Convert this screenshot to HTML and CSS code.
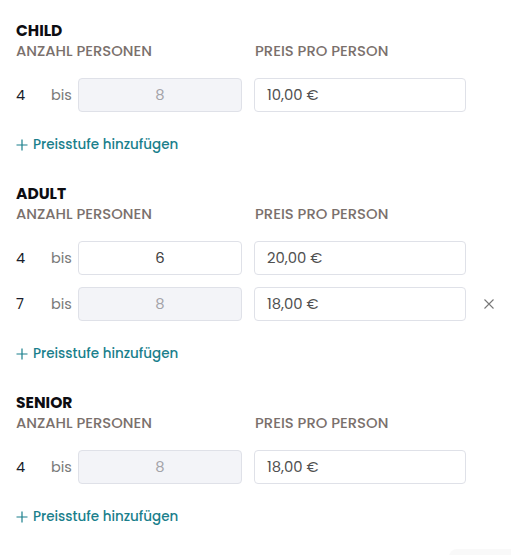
FILE: index.html
```html
<!DOCTYPE html>
<html lang="de">
<head>
<meta charset="utf-8">
<link rel="stylesheet" href="styles.css">
</head>
<body>
<div class="page">
  <section class="group">
    <h2 class="group-title">CHILD</h2>
    <div class="labels"><span class="lbl lbl-count">ANZAHL PERSONEN</span><span class="lbl">PREIS PRO PERSON</span></div>
    <div class="rows">
      <div class="row">
        <span class="from">4</span><span class="bis">bis</span>
        <div class="field field-to disabled">8</div>
        <div class="field field-price">10,00 €</div>
      </div>
    </div>
    <a class="add" href="#"><svg class="plus" viewBox="0 0 12 12" width="12" height="12"><path d="M6 0.5v11M0.5 6h11" stroke="currentColor" stroke-width="1.2" fill="none"/></svg>Preisstufe hinzufügen</a>
  </section>

  <section class="group">
    <h2 class="group-title">ADULT</h2>
    <div class="labels"><span class="lbl lbl-count">ANZAHL PERSONEN</span><span class="lbl">PREIS PRO PERSON</span></div>
    <div class="rows">
      <div class="row">
        <span class="from">4</span><span class="bis">bis</span>
        <div class="field field-to">6</div>
        <div class="field field-price">20,00 €</div>
      </div>
      <div class="row">
        <span class="from">7</span><span class="bis">bis</span>
        <div class="field field-to disabled">8</div>
        <div class="field field-price">18,00 €</div>
        <button class="remove" type="button" aria-label="Entfernen"><svg viewBox="0 0 10 10" width="10" height="10"><path d="M0.5 0.5l9 9M9.5 0.5l-9 9" stroke="currentColor" stroke-width="1.1" fill="none"/></svg></button>
      </div>
    </div>
    <a class="add" href="#"><svg class="plus" viewBox="0 0 12 12" width="12" height="12"><path d="M6 0.5v11M0.5 6h11" stroke="currentColor" stroke-width="1.2" fill="none"/></svg>Preisstufe hinzufügen</a>
  </section>

  <section class="group">
    <h2 class="group-title">SENIOR</h2>
    <div class="labels"><span class="lbl lbl-count">ANZAHL PERSONEN</span><span class="lbl">PREIS PRO PERSON</span></div>
    <div class="rows">
      <div class="row">
        <span class="from">4</span><span class="bis">bis</span>
        <div class="field field-to disabled">8</div>
        <div class="field field-price">18,00 €</div>
      </div>
    </div>
    <a class="add" href="#"><svg class="plus" viewBox="0 0 12 12" width="12" height="12"><path d="M6 0.5v11M0.5 6h11" stroke="currentColor" stroke-width="1.2" fill="none"/></svg>Preisstufe hinzufügen</a>
  </section>

  <div class="footer"><div class="ghost-btn"></div></div>
</div>
</body>
</html>
```

FILE: styles.css
```css
html, body {
  margin: 0;
  padding: 0;
  background: #ffffff;
  overflow: hidden;
}
body {
  font-family: "Poppins", "Open Sans", "Noto Sans", sans-serif;
  color: #1c1c28;
}
.page {
  padding: 21px 0 0 16px;
  display: flex;
  flex-direction: column;
  gap: 29px;
}
.group {
  display: flex;
  flex-direction: column;
}
.group-title {
  margin: 0;
  font-size: 15.5px;
  line-height: 20px;
  font-weight: 700;
  color: #0d0d12;
}
.labels {
  display: flex;
  height: 20px;
  align-items: center;
  margin-bottom: 17px;
}
.lbl {
  font-size: 14.8px;
  font-weight: 500;
  color: #7a706c;
}
.lbl-count {
  width: 239px;
}
.rows {
  display: flex;
  flex-direction: column;
  gap: 12px;
}
.row {
  display: flex;
  align-items: center;
  height: 34px;
}
.from {
  width: 35px;
  font-size: 14.5px;
  color: #1a1d2b;
}
.bis {
  width: 27px;
  font-size: 14.5px;
  color: #7a7a7a;
}
.field {
  box-sizing: border-box;
  height: 34px;
  border: 1px solid #dfe1e8;
  border-radius: 4px;
  display: flex;
  align-items: center;
  font-size: 14.8px;
  color: #474747;
  background: #ffffff;
}
.field-to {
  width: 164px;
  justify-content: center;
  color: #3d3d3d;
}
.field-to.disabled {
  background: #f3f4f8;
  color: #a3a3a8;
}
.field-price {
  width: 212px;
  margin-left: 12px;
  padding-left: 12px;
  color: #505050;
}
.remove {
  border: 0;
  background: none;
  padding: 0;
  margin-left: 18px;
  width: 10px;
  height: 10px;
  color: #777777;
  display: flex;
}
.add {
  margin-top: 23px;
  height: 20px;
  display: flex;
  align-items: center;
  gap: 5px;
  font-size: 13.5px;
  font-weight: 500;
  color: #1a7f8c;
  text-decoration: none;
  align-self: flex-start;
}
.plus {
  display: block;
}
.footer {
  display: flex;
  justify-content: flex-end;
  margin-top: -7px;
}
.ghost-btn {
  width: 62px;
  height: 20px;
  background: #f9f9f9;
  border-radius: 8px 0 0 0;
}
```
